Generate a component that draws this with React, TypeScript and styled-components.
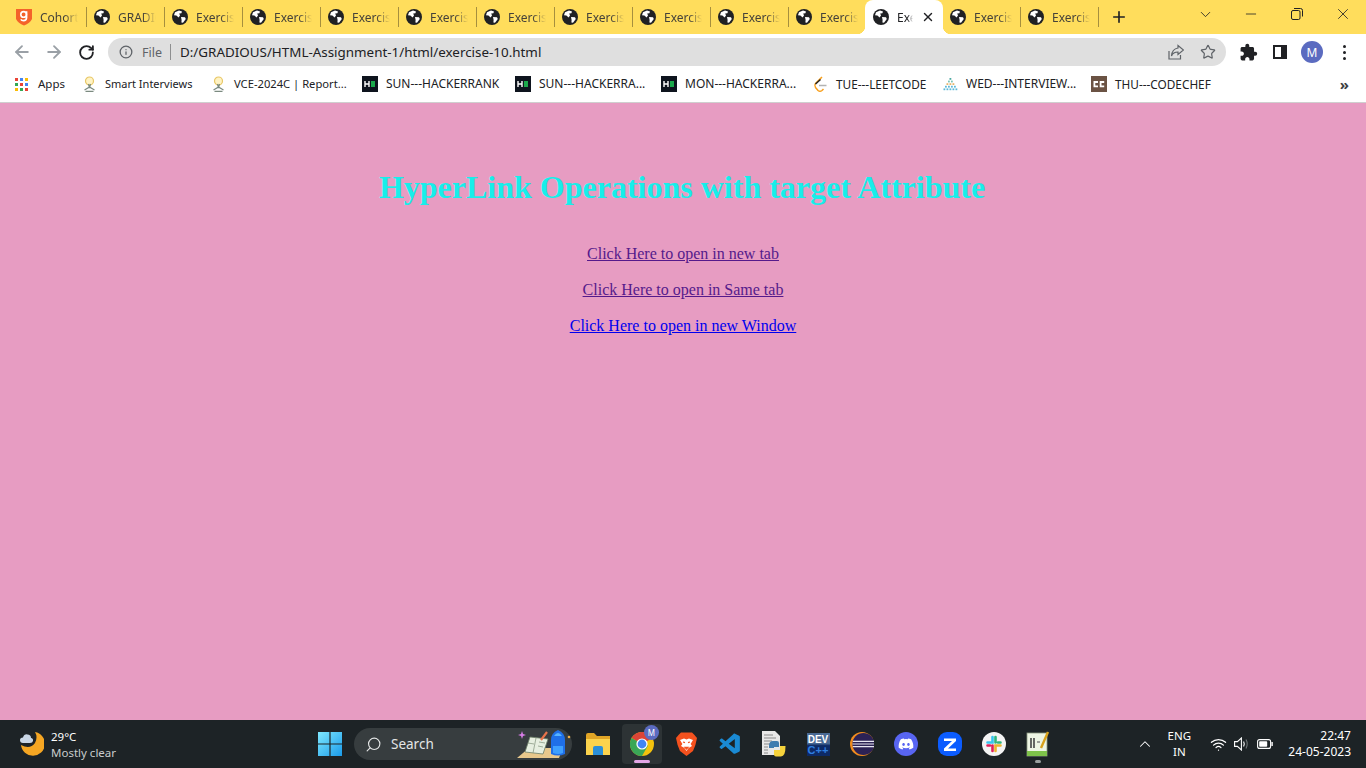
import React from 'react';
import styled, { createGlobalStyle } from 'styled-components';
import { ArrowLeft, ArrowRight, RotateCw, Star, X, Plus, ChevronDown, ChevronUp, Minus, Search, Info, Wifi } from 'lucide-react';
import { MdExtension } from 'react-icons/md';
import { FaDiscord } from 'react-icons/fa';
import { VscVscode } from 'react-icons/vsc';

const UI_FONT = '"Noto Sans", "Open Sans", sans-serif';

const tabs = ['Cohort', 'GRADIOUS', ...Array(12).fill('Exercise')];
const ACTIVE_TAB = 11;

export default function App() {
    return (<>
        <GlobalStyle />
        <Screen>
            <TabStrip>
                {tabs.map((title, i) => (
                    <Tab key={i} $active={i === ACTIVE_TAB} $hideDivider={i === ACTIVE_TAB - 1 || i === ACTIVE_TAB}>
                        {i === 0 ? <CohortIcon /> : <GlobeIcon />}
                        <TabTitle $active={i === ACTIVE_TAB}>{title}</TabTitle>
                        {i === ACTIVE_TAB && <TabClose><X size={14} strokeWidth={2.4} /></TabClose>}
                    </Tab>
                ))}
                <NewTab><Plus size={18} strokeWidth={2.2} /></NewTab>
                <WindowControls>
                    <WindowButton><ChevronDown size={17} strokeWidth={1.2} /></WindowButton>
                    <WindowButton><Minus size={16} strokeWidth={1.2} /></WindowButton>
                    <WindowButton><RestoreIcon /></WindowButton>
                    <WindowButton><X size={18} strokeWidth={1.1} /></WindowButton>
                </WindowControls>
            </TabStrip>

            <Toolbar>
                <NavButton $muted><ArrowLeft size={20} strokeWidth={2.2} /></NavButton>
                <NavButton $muted><ArrowRight size={20} strokeWidth={2.2} /></NavButton>
                <NavButton><RotateCw size={17} strokeWidth={2.6} /></NavButton>
                <AddressBar>
                    <Info size={14} strokeWidth={2.2} color="#5f6368" />
                    <SiteLabel>File</SiteLabel>
                    <AddressDivider />
                    <Url>D:/GRADIOUS/HTML-Assignment-1/html/exercise-10.html</Url>
                    <ShareIcon />
                    <Star size={16} strokeWidth={1.8} color="#5f6368" />
                </AddressBar>
                <ToolIcons>
                    <ToolSlot><MdExtension size={19} color="#202124" /></ToolSlot>
                    <ToolSlot><SidePanelIcon /></ToolSlot>
                    <ToolSlot><Avatar>M</Avatar></ToolSlot>
                    <ToolSlot><MenuDots><i /><i /><i /></MenuDots></ToolSlot>
                </ToolIcons>
            </Toolbar>

            <BookmarkBar>
                <Bookmark $width={28} $size={11.5}><AppsIcon />Apps</Bookmark>
                <Bookmark $width={90} $size={11}><BulbIcon />Smart Interviews</Bookmark>
                <Bookmark $width={112} $size={11.2}><BulbIcon />VCE-2024C | Report...</Bookmark>
                <Bookmark $width={113} $size={12}><HackerRankIcon />SUN---HACKERRANK</Bookmark>
                <Bookmark $width={106} $size={12}><HackerRankIcon />SUN---HACKERRA...</Bookmark>
                <Bookmark $width={112} $size={12}><HackerRankIcon />MON---HACKERRA...</Bookmark>
                <Bookmark $width={90} $size={11.8}><LeetCodeIcon />TUE---LEETCODE</Bookmark>
                <Bookmark $width={109} $size={12}><InterviewBitIcon />WED---INTERVIEW...</Bookmark>
                <Bookmark $width={96} $size={11.8}><CodeChefIcon />THU---CODECHEF</Bookmark>
                <MoreBookmarks>»</MoreBookmarks>
            </BookmarkBar>

            <Page>
                <Heading>HyperLink Operations with target Attribute</Heading>
                <LinkLine><PageLink href="#a" $visited>Click Here to open in new tab</PageLink></LinkLine>
                <LinkLine><PageLink href="#b" $visited>Click Here to open in Same tab</PageLink></LinkLine>
                <LinkLine><PageLink href="#c">Click Here to open in new Window</PageLink></LinkLine>
            </Page>

            <Taskbar>
                <Weather>
                    <MoonIcon />
                    <WeatherText>
                        <span>29°C</span>
                        <WeatherNote>Mostly clear</WeatherNote>
                    </WeatherText>
                </Weather>
                <TaskCenter>
                    <WindowsIcon />
                    <SearchPill>
                        <Search size={17} strokeWidth={1.6} style={{ transform: 'scaleX(-1)' }} />
                        <SearchLabel>Search</SearchLabel>
                        <SearchArt />
                    </SearchPill>
                    <TaskApps>
                        <TaskApp><FolderIcon /></TaskApp>
                        <TaskApp $active $indicator="#e3a6e6"><ChromeIcon /><ProfileBadge>M</ProfileBadge></TaskApp>
                        <TaskApp><BraveIcon /></TaskApp>
                        <TaskApp><VscVscode size={25} color="#1a8ad4" /></TaskApp>
                        <TaskApp><PythonFileIcon /></TaskApp>
                        <TaskApp><DevTile><DevWord>DEV</DevWord><DevPlus>C++</DevPlus></DevTile></TaskApp>
                        <TaskApp><EclipseIcon /></TaskApp>
                        <TaskApp><RoundApp><FaDiscord size={16} color="#fff" /></RoundApp></TaskApp>
                        <TaskApp><ZoomAppIcon /></TaskApp>
                        <TaskApp><SlackIcon /></TaskApp>
                        <TaskApp $indicator="#9aa0a0" $smallIndicator><NotepadIcon /></TaskApp>
                    </TaskApps>
                </TaskCenter>
                <Tray>
                    <ChevronUp size={18} strokeWidth={1.4} />
                    <Lang><span>ENG</span><span>IN</span></Lang>
                    <TrayIcons>
                        <Wifi size={17} strokeWidth={1.8} />
                        <VolumeIcon />
                        <BatteryIcon />
                    </TrayIcons>
                    <Clock><span>22:47</span><span>24-05-2023</span></Clock>
                </Tray>
            </Taskbar>
        </Screen>
    </>);
}

function GlobeIcon() {
    return (<svg width="16" height="16" viewBox="0 0 16 16" style={{ flex: 'none' }}>
        <circle cx="8" cy="8" r="8" fill="#202124" />
        <path d="M3 3.2 L7 1.6 L10 2.4 L9.4 4.2 L7.2 4.6 L8 6.4 L6.6 8.6 L4.4 6.6 L2 6.2 Z" fill="#fff" />
        <path d="M9 8 L13 8.2 L13.8 10 L11 13.8 L9.4 13.4 L9.6 11 Z" fill="#fff" />
    </svg>);
}

function CohortIcon() {
    return (<svg width="16" height="18" viewBox="0 0 16 18" style={{ flex: 'none' }}>
        <path d="M0 1 H16 V11 Q14 15 8 17.5 Q2 15 0 11 Z" fill="#f4622a" />
        <circle cx="7.6" cy="6.4" r="2.8" fill="none" stroke="#fff" strokeWidth="1.6" />
        <path d="M10.6 3.2 V9.6 Q10.4 12.6 7.6 12.6 Q5.6 12.6 4.8 11.4" fill="none" stroke="#fff" strokeWidth="1.6" />
    </svg>);
}

function RestoreIcon() {
    return (<svg width="12" height="12" viewBox="0 0 12 12" fill="none" stroke="#202124" strokeWidth="1">
        <rect x="0.5" y="2.5" width="8.5" height="9" rx="1.5" />
        <path d="M3 0.5 H9.5 Q11.5 0.5 11.5 2.5 V8.5" />
    </svg>);
}

function ShareIcon() {
    return (<svg width="16" height="16" viewBox="0 0 16 16" fill="none" stroke="#5f6368" strokeWidth="1.2" style={{ marginLeft: 'auto', marginRight: 16 }}>
        <path d="M1 7 V15 H12.5 V11" />
        <path d="M10 1.5 L15.5 6 L10 10.5 V8 Q5 8 3.5 12 Q4 5 10 4 Z" />
    </svg>);
}

function SidePanelIcon() {
    return (<svg width="14" height="14" viewBox="0 0 14 14">
        <path d="M0 0 H14 V14 H0 Z M2 2 V12 H8 V2 Z" fill="#202124" fillRule="evenodd" />
    </svg>);
}

function AppsIcon() {
    const colors = ['#ea4335', '#4285f4', '#fbbc05', '#34a853', '#ea4335', '#4285f4', '#fbbc05', '#34a853', '#ea4335'];
    return (<svg width="13" height="13" viewBox="0 0 13 13" style={{ flex: 'none', marginRight: 2 }}>
        {colors.map((c, i) => <rect key={i} x={(i % 3) * 5} y={Math.floor(i / 3) * 5} width="3" height="3" fill={c} />)}
    </svg>);
}

function BulbIcon() {
    return (<svg width="15" height="16" viewBox="0 0 14 16" style={{ flex: 'none' }}>
        <circle cx="7" cy="5" r="4" fill="#fff3c4" stroke="#e8c766" strokeWidth="1.2" />
        <path d="M6 8 L7 12 L8 8 M2 14 L7 11 L12 14 M3 15.4 H11" stroke="#7b8a80" strokeWidth="1.2" fill="none" />
    </svg>);
}

function HackerRankIcon() {
    return (<svg width="16" height="16" viewBox="0 0 16 16" style={{ flex: 'none' }}>
        <rect width="16" height="16" fill="#0e141e" />
        <path d="M3 5 V11 M7 5 V11 M3 8 H7" stroke="#fff" strokeWidth="1.4" />
        <rect x="9" y="5" width="4" height="6" fill="#1ba94c" />
    </svg>);
}

function LeetCodeIcon() {
    return (<svg width="15" height="17" viewBox="0 0 14 17" fill="none" strokeWidth="1.5" style={{ flex: 'none' }}>
        <path d="M8.5 1 L2 7.5 Q0.5 9.5 2 11.5 L4.5 14.5 Q6.5 16 8.5 14.5 L10 13" stroke="#f89f1b" />
        <path d="M2 8 L7 3.5" stroke="#222" />
        <path d="M5.5 9.5 H13" stroke="#b3b3b3" />
    </svg>);
}

function InterviewBitIcon() {
    const rows = [[7], [5.5, 8.5], [4, 7, 10], [2.5, 5.5, 8.5, 11.5], [1, 4, 7, 10, 13]];
    const colors = ['#4aa8a0', '#7cc4b8', '#e8b36a', '#5cb8d8', '#5cb8d8'];
    return (<svg width="16" height="14" viewBox="0 0 15 14" style={{ flex: 'none' }}>
        {rows.map((row, y) => row.map(x => <rect key={`${x}-${y}`} x={x} y={1 + y * 2.6} width="1.8" height="1.8" fill={colors[y]} />))}
    </svg>);
}

function CodeChefIcon() {
    return (<svg width="16" height="16" viewBox="0 0 16 16" style={{ flex: 'none' }}>
        <rect width="16" height="16" fill="#6b5344" />
        <path d="M7 6 H3.4 V10.4 H7 M13.2 6 H9.6 V10.4 H13.2" fill="none" stroke="#fff" strokeWidth="1.8" />
    </svg>);
}

function MoonIcon() {
    return (<svg width="24" height="26" viewBox="0 0 24 26" style={{ flex: 'none' }}>
        <path d="M15 1 A12 12 0 1 1 1 14 Q10 19 15 12 Q18 6 15 1 Z" fill="#f5a623" />
        <path d="M3 12 Q0 12 0 9 Q0 6.4 3 6.4 Q4 3 7.4 3.4 Q11 3.6 11 7 Q13.4 7.4 13 10 Q12.6 12 10 12 Z" fill="#c9d6e6" />
    </svg>);
}

function WindowsIcon() {
    return (<svg width="24" height="24" viewBox="0 0 24 24" style={{ flex: 'none' }}>
        <defs>
            <linearGradient id="win" x1="0" y1="0" x2="1" y2="1">
                <stop offset="0" stopColor="#7fe8ff" />
                <stop offset="1" stopColor="#1a9bea" />
            </linearGradient>
        </defs>
        <path d="M0 0 H11.4 V11.4 H0 Z M12.6 0 H24 V11.4 H12.6 Z M0 12.6 H11.4 V24 H0 Z M12.6 12.6 H24 V24 H12.6 Z" fill="url(#win)" />
    </svg>);
}

function SearchArt() {
    return (<svg width="54" height="30" viewBox="0 0 54 30" style={{ marginLeft: 'auto', marginRight: 1 }}>
        <path d="M0 29 L12 19 H46 L42 29 Z" fill="#e8c88c" />
        <path d="M8 23 L13 8 L31 10 L26 25 Z" fill="#e6efe0" stroke="#6d8068" strokeWidth="0.8" />
        <path d="M19 9 L16 24 M11 14 L17 15 M22 13 L28 14 M21 17 L26 18" stroke="#8b9c86" strokeWidth="0.8" />
        <path d="M24 11 L30 3" stroke="#e9734a" strokeWidth="2.2" />
        <path d="M4 5 L5 2 L6 5 L9 6 L6 7 L5 10 L4 7 L1 6 Z" fill="#d77de6" />
        <path d="M34 25 V11 Q34 4 41 1 Q48 4 48 11 V25 Q41 28 34 25 Z" fill="#1f6fe8" />
        <path d="M36 17 H46 V24 Q41 26 36 24 Z" fill="#3ea0ff" />
        <path d="M37 7 Q41 1 45 7" fill="#58b4ff" />
        <circle cx="52" cy="8" r="1.3" fill="#f0b04a" />
    </svg>);
}

function FolderIcon() {
    return (<svg width="24" height="22" viewBox="0 0 24 22">
        <path d="M0 2 Q0 0 2 0 H8 L11 3 H24 V8 H0 Z" fill="#e0a526" />
        <path d="M0 6 H24 V22 H0 Z" fill="#fbd34d" />
        <path d="M7 15 Q7 13 9 13 H15 Q17 13 17 15 V22 H7 Z" fill="#2a8fd8" />
    </svg>);
}

function ChromeIcon() {
    return (<svg width="24" height="24" viewBox="0 0 24 24">
        <circle cx="12" cy="12" r="12" fill="#f4c20d" />
        <path d="M12 12 L1.6 6 A12 12 0 0 1 22.4 6 Z" fill="#db4437" />
        <path d="M12 12 L1.6 6 A12 12 0 0 0 12 24 L18 13.5 Z" fill="#3aa757" />
        <circle cx="12" cy="12" r="5.6" fill="#fff" />
        <circle cx="12" cy="12" r="4.4" fill="#4285f4" />
    </svg>);
}

function BraveIcon() {
    return (<svg width="21" height="24" viewBox="0 0 21 24">
        <path d="M5 0.5 H16 L18.5 3 L21 6 L19.4 13 L17 19 L10.5 24 L4 19 L1.6 13 L0 6 L2.5 3 Z" fill="#f4511e" />
        <path d="M4 8 L8 6.5 L10.5 7.5 L13 6.5 L17 8 L14.6 12 L16 14 L12.6 16 L10.5 19 L8.4 16 L5 14 L6.4 12 Z" fill="#fff" />
        <path d="M7 10 L9 10.6 M14 10 L12 10.6 M9 15.4 H12 L10.5 17 Z" stroke="#f4511e" strokeWidth="1.2" fill="#f4511e" />
    </svg>);
}

function PythonFileIcon() {
    return (<svg width="24" height="26" viewBox="0 0 24 26">
        <path d="M0 0 H13 L18 5 V24 H0 Z" fill="#e8e8e8" />
        <path d="M2 4 H11 M2 7 H14 M2 10 H10 M2 13 H8 M2 16 H6 M2 19 H6 M2 22 H6" stroke="#8a8a8a" strokeWidth="1" />
        <path d="M7 15 Q7 10 11 10 H15 Q17 10 17 12 V16 H12 V17 H7 Z" fill="#3f7cb0" />
        <path d="M23.5 15 Q23.5 25.5 19 25.5 H14 Q12 25.5 12 23.5 V19 H18 V15 Z" fill="#f6d33c" />
    </svg>);
}

function EclipseIcon() {
    return (<svg width="24" height="24" viewBox="0 0 24 24">
        <circle cx="12" cy="12" r="12" fill="#f28c1e" />
        <circle cx="13.4" cy="12" r="11" fill="#2c2255" />
        <path d="M2.8 9.4 H24.2 M2.4 12 H24.4 M2.8 14.6 H24.2" stroke="#e8e6f2" strokeWidth="1.2" />
    </svg>);
}

function ZoomAppIcon() {
    return (<svg width="24" height="24" viewBox="0 0 24 24">
        <rect width="24" height="24" rx="9" fill="#0b5cff" />
        <path d="M6 6.5 H18 V9 L10 16.5 H18 V19 H6 V16.5 L14 9 H6 Z" fill="#fff" />
    </svg>);
}

function SlackIcon() {
    return (<svg width="24" height="24" viewBox="0 0 24 24">
        <circle cx="12" cy="12" r="12" fill="#f4f4f4" />
        <path d="M10.5 5 V10.5 H5.5" fill="none" stroke="#36c5f0" strokeWidth="2.6" strokeLinecap="round" />
        <path d="M13.5 5 V10.5 M18.5 10.5 H16" fill="none" stroke="#2eb67d" strokeWidth="2.6" strokeLinecap="round" />
        <path d="M13.5 19 V13.5 H18.5" fill="none" stroke="#ecb22e" strokeWidth="2.6" strokeLinecap="round" />
        <path d="M10.5 19 V13.5 M5.5 13.5 H8" fill="none" stroke="#e01e5a" strokeWidth="2.6" strokeLinecap="round" />
    </svg>);
}

function NotepadIcon() {
    return (<svg width="24" height="26" viewBox="0 0 24 26">
        <rect x="1" y="2" width="20" height="23" fill="#eef5e4" stroke="#8a9a80" strokeWidth="0.8" />
        <path d="M1 20 H21 V25 H1 Z" fill="#7ec24a" />
        <path d="M5 7 V17 M8 7 V17" stroke="#444" strokeWidth="1.6" />
        <path d="M11 11 H14" stroke="#777" strokeWidth="1.4" />
        <path d="M22 1 L15 17" stroke="#d9a21b" strokeWidth="2.4" />
    </svg>);
}

function VolumeIcon() {
    return (<svg width="16" height="14" viewBox="0 0 16 14" fill="none" stroke="#fff" strokeWidth="1.1">
        <path d="M0.6 4.6 H3.4 L7.4 1 V13 L3.4 9.4 H0.6 Z" />
        <path d="M9.6 4.4 Q11 7 9.6 9.6" />
        <path d="M12 2.6 Q14.4 7 12 11.4" stroke="#6f7577" />
    </svg>);
}

function BatteryIcon() {
    return (<svg width="16" height="10" viewBox="0 0 16 10" fill="none">
        <rect x="0.6" y="0.6" width="13" height="8.8" rx="2" stroke="#fff" strokeWidth="1.1" />
        <rect x="2.2" y="2.2" width="8" height="5.6" rx="0.8" fill="#fff" />
        <rect x="14.4" y="3" width="1.4" height="4" fill="#fff" />
    </svg>);
}

const GlobalStyle = createGlobalStyle`
    html, body {
        margin: 0;
        padding: 0;
        height: 100%;
        overflow: hidden;
    }
    #root {
        height: 100%;
    }
`;

const Screen = styled.div`
    height: 768px;
    display: flex;
    flex-direction: column;
    font-family: ${UI_FONT};
    background: #fff;
`;

const TabStrip = styled.div`
    height: 34px;
    flex: none;
    display: flex;
    align-items: stretch;
    padding-left: 8px;
    background: #ffdd5c;
`;

const Tab = styled.div<{ $active?: boolean; $hideDivider?: boolean }>`
    position: relative;
    width: 78px;
    flex: none;
    box-sizing: border-box;
    display: flex;
    align-items: center;
    gap: 8px;
    padding: 0 8px;
    margin: ${p => (p.$active ? '0 -1px' : '0')};
    background: ${p => (p.$active ? '#fff' : 'transparent')};
    border-radius: ${p => (p.$active ? '8px 8px 0 0' : '0')};
    &::after {
        content: '';
        display: ${p => (p.$hideDivider ? 'none' : 'block')};
        position: absolute;
        right: -1px;
        top: 7px;
        bottom: 7px;
        width: 1px;
        background: #a68f3e;
    }
    &::before {
        content: '';
        display: ${p => (p.$active ? 'block' : 'none')};
        position: absolute;
        left: -8px;
        right: -8px;
        bottom: 0;
        height: 8px;
        z-index: 0;
        background:
            radial-gradient(circle at 0 0, #ffdd5c 8px, transparent 8.5px) 0 0 / 8px 8px no-repeat,
            radial-gradient(circle at 100% 0, #ffdd5c 8px, transparent 8.5px) 100% 0 / 8px 8px no-repeat,
            linear-gradient(#fff, #fff) 0 0 / 100% 100%;
    }
    & > * {
        position: relative;
        z-index: 1;
    }
`;

const TabTitle = styled.span<{ $active?: boolean }>`
    flex: 1;
    min-width: 0;
    overflow: hidden;
    white-space: nowrap;
    font-size: 12px;
    color: ${p => (p.$active ? '#202124' : '#45423a')};
    -webkit-mask-image: linear-gradient(to right, #000 65%, transparent 100%);
    mask-image: linear-gradient(to right, #000 65%, transparent 100%);
`;

const TabClose = styled.span`
    flex: none;
    display: flex;
    color: #202124;
`;

const NewTab = styled.div`
    width: 26px;
    margin-left: 8px;
    display: flex;
    align-items: center;
    justify-content: center;
    color: #202124;
`;

const WindowControls = styled.div`
    margin-left: auto;
    display: flex;
    align-items: flex-start;
`;

const WindowButton = styled.div`
    width: 46px;
    height: 28px;
    display: flex;
    align-items: center;
    justify-content: center;
    color: #202124;
`;

const Toolbar = styled.div`
    height: 34px;
    flex: none;
    box-sizing: border-box;
    display: flex;
    align-items: center;
    padding: 2px 0 0 6px;
    background: #fff;
`;

const NavButton = styled.div<{ $muted?: boolean }>`
    width: 32px;
    display: flex;
    justify-content: center;
    color: ${p => (p.$muted ? '#9aa0a6' : '#202124')};
`;

const AddressBar = styled.div`
    width: 1118px;
    height: 28px;
    margin-left: 6px;
    box-sizing: border-box;
    display: flex;
    align-items: center;
    padding: 0 10px 0 11px;
    border-radius: 14px;
    background: #dfdfdf;
`;

const SiteLabel = styled.span`
    margin-left: 9px;
    font-size: 12.5px;
    color: #5f6368;
`;

const AddressDivider = styled.span`
    width: 1px;
    height: 16px;
    margin: 0 9px 0 8px;
    background: #8e8f90;
`;

const Url = styled.span`
    font-size: 13.4px;
    color: #202124;
`;

const ToolIcons = styled.div`
    display: flex;
    align-items: center;
    margin-left: 6px;
`;

const ToolSlot = styled.div`
    width: 32px;
    display: flex;
    align-items: center;
    justify-content: center;
`;

const Avatar = styled.div`
    width: 22px;
    height: 22px;
    border-radius: 50%;
    display: flex;
    align-items: center;
    justify-content: center;
    background: #5b6bc0;
    color: #fff;
    font-size: 12px;
`;

const MenuDots = styled.div`
    display: flex;
    flex-direction: column;
    gap: 3px;
    i {
        width: 3px;
        height: 3px;
        border-radius: 50%;
        background: #202124;
    }
`;

const BookmarkBar = styled.div`
    height: 35px;
    flex: none;
    box-sizing: border-box;
    display: flex;
    align-items: center;
    gap: 16px;
    padding: 0 17px 2px 15px;
    background: #fff;
    border-bottom: 1px solid #cfcfcf;
`;

const Bookmark = styled.div<{ $width: number; $size: number }>`
    display: grid;
    grid-template-columns: auto ${p => p.$width}px;
    align-items: center;
    column-gap: 8px;
    font-size: ${p => p.$size}px;
    line-height: 14px;
    white-space: nowrap;
    color: #202124;
`;

const MoreBookmarks = styled.div`
    margin-left: auto;
    font-size: 15px;
    font-weight: 700;
    color: #3c4043;
    line-height: 1;
`;

const Page = styled.main`
    flex: 1;
    min-height: 0;
    background: #e79cc2;
    text-align: center;
    font-family: "Liberation Serif", "Times New Roman", serif;
    padding-top: 66px;
`;

const Heading = styled.h1`
    margin: 0 0 38px;
    padding-right: 2px;
    font-size: 32px;
    line-height: 37px;
    font-weight: 700;
    color: #17eeea;
`;

const LinkLine = styled.p`
    margin: 0 0 16px;
    font-size: 16px;
    line-height: 20px;
`;

const PageLink = styled.a<{ $visited?: boolean }>`
    color: ${p => (p.$visited ? '#551a8b' : '#0000ee')};
`;

const Taskbar = styled.footer`
    height: 48px;
    flex: none;
    display: grid;
    grid-template-columns: 318px 1fr auto;
    align-items: center;
    background: #1d2326;
    color: #fff;
`;

const Weather = styled.div`
    display: flex;
    align-items: center;
    gap: 7px;
    padding-left: 20px;
`;

const WeatherText = styled.div`
    display: flex;
    flex-direction: column;
    padding-top: 1px;
    font-size: 11.5px;
    line-height: 16px;
`;

const WeatherNote = styled.span`
    color: #c9cccd;
`;

const TaskCenter = styled.div`
    display: flex;
    align-items: center;
`;

const SearchPill = styled.div`
    width: 218px;
    height: 32px;
    margin-left: 12px;
    box-sizing: border-box;
    display: flex;
    align-items: center;
    padding-left: 11px;
    border-radius: 16px;
    background: #373d3f;
    color: #e4e6e6;
`;

const SearchLabel = styled.span`
    margin-left: 9px;
    font-size: 13.5px;
`;

const TaskApps = styled.div`
    display: flex;
    align-items: center;
    gap: 4px;
    margin-left: 6px;
`;

const TaskApp = styled.div<{ $active?: boolean; $indicator?: string; $smallIndicator?: boolean }>`
    position: relative;
    width: 40px;
    height: 40px;
    box-sizing: border-box;
    display: flex;
    align-items: center;
    justify-content: center;
    border-radius: 4px;
    background: ${p => (p.$active ? '#2d3335' : 'transparent')};
    &::after {
        content: '';
        display: ${p => (p.$indicator ? 'block' : 'none')};
        position: absolute;
        bottom: 1px;
        left: 50%;
        width: ${p => (p.$smallIndicator ? 6 : 16)}px;
        height: 3px;
        margin-left: ${p => (p.$smallIndicator ? -3 : -8)}px;
        border-radius: 2px;
        background: ${p => p.$indicator};
    }
`;

const ProfileBadge = styled.span`
    position: absolute;
    top: 1px;
    right: 3px;
    width: 15px;
    height: 15px;
    border-radius: 50%;
    display: flex;
    align-items: center;
    justify-content: center;
    background: #5b6bc0;
    color: #fff;
    font-size: 8px;
`;

const RoundApp = styled.div`
    width: 24px;
    height: 24px;
    border-radius: 50%;
    display: flex;
    align-items: center;
    justify-content: center;
    background: #5865f2;
`;

const DevTile = styled.div`
    width: 23px;
    height: 23px;
    display: flex;
    flex-direction: column;
    align-items: center;
    background: linear-gradient(#4a6a94 45%, #0d2a66 55%);
    font-family: "Liberation Sans", sans-serif;
    font-weight: 700;
    line-height: 11px;
    overflow: hidden;
`;

const DevWord = styled.span`
    font-size: 10px;
    color: #fff;
    padding-top: 1px;
`;

const DevPlus = styled.span`
    font-size: 11px;
    color: #2f7fe0;
`;

const Tray = styled.div`
    display: flex;
    align-items: center;
    padding-right: 15px;
`;

const Lang = styled.div`
    width: 30px;
    margin-left: 10px;
    display: flex;
    flex-direction: column;
    align-items: center;
    font-size: 11.5px;
    line-height: 16px;
`;

const TrayIcons = styled.div`
    display: flex;
    align-items: center;
    gap: 7px;
    margin-left: 16px;
`;

const Clock = styled.div`
    margin-left: 15px;
    display: flex;
    flex-direction: column;
    align-items: flex-end;
    font-size: 12px;
    line-height: 16px;
`;
